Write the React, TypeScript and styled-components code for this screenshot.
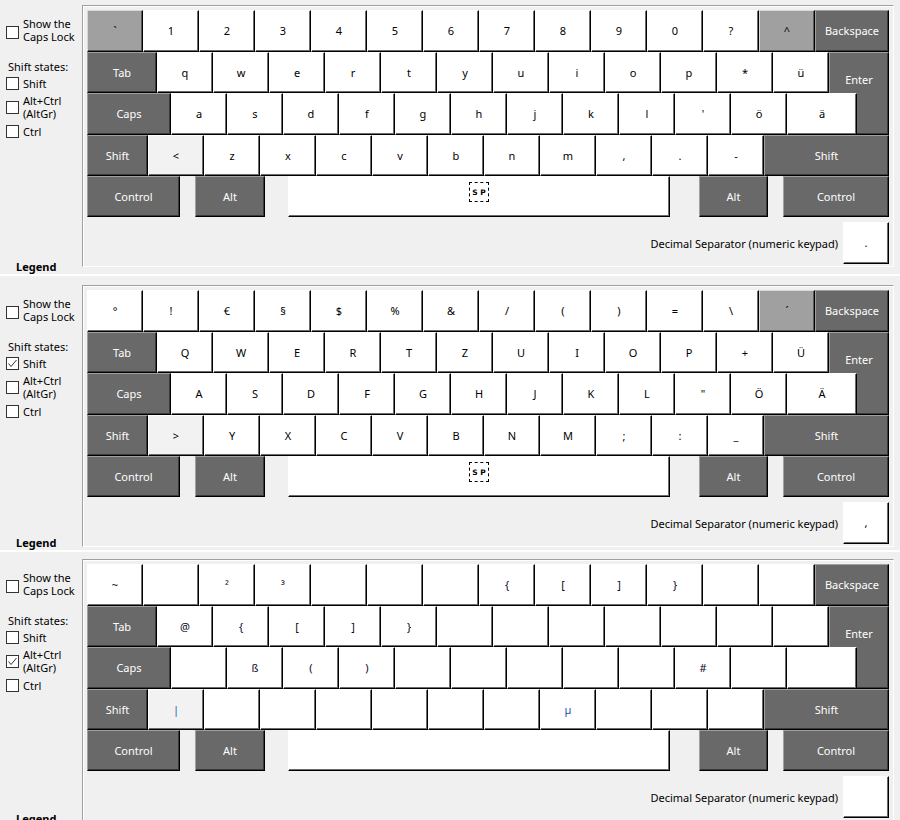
import React from 'react';
import styled, { createGlobalStyle } from 'styled-components';

const Global = createGlobalStyle`
  html, body { margin: 0; padding: 0; background: #f0f0f0; }
  body {
    width: 900px; height: 820px; overflow: hidden;
    font-family: "Noto Sans", "Open Sans", sans-serif;
    font-size: 11px; color: #000;
  }
`;

type Kind = 'white' | 'dark' | 'dead' | 'light';

const palette: Record<Kind, { bg: string; hl: string; fg: string; sh: string }> = {
  white: { bg: '#ffffff', hl: '#ffffff', fg: '#000000', sh: '#6b6b6b' },
  dark: { bg: '#696969', hl: '#a0a0a0', fg: '#ffffff', sh: '#3a3a3a' },
  dead: { bg: '#a0a0a0', hl: '#d8d8d8', fg: '#000000', sh: '#5a5a5a' },
  light: { bg: '#f2f2f2', hl: '#ffffff', fg: '#000000', sh: '#6b6b6b' },
};

const Page = styled.div`
  display: flex;
  flex-direction: column;
`;

const Divider = styled.div`
  height: 2px;
  flex-shrink: 0;
  background: #ffffff;
`;

const Panel = styled.section<{ $top: number }>`
  display: flex;
  flex-shrink: 0;
  height: 274px;
  box-sizing: border-box;
  padding-top: ${(p) => p.$top}px;
`;

const Sidebar = styled.div`
  width: 82px;
  flex-shrink: 0;
  display: flex;
  flex-direction: column;
  padding: 12px 0 0 6px;
  box-sizing: border-box;
  line-height: 13px;
  font-size: 11px;
`;

const OptionRow = styled.label<{ $mt: number; $boxTop: number }>`
  display: flex;
  align-items: flex-start;
  gap: 4px;
  margin-top: ${(p) => p.$mt}px;
  & > span:first-child { margin-top: ${(p) => p.$boxTop}px; }
`;

const OptionText = styled.span`
  display: flex;
  flex-direction: column;
  white-space: nowrap;
`;

const Heading = styled.div`
  margin-top: 17px;
  padding-left: 2px;
  white-space: nowrap;
`;

const Box = styled.span`
  width: 13px;
  height: 13px;
  flex-shrink: 0;
  box-sizing: border-box;
  border: 1px solid #333333;
  background: #ffffff;
  display: flex;
`;

const Legend = styled.div`
  margin-top: auto;
  padding-left: 10px;
  font-weight: 700;
  font-size: 11px;
  line-height: 14px;
`;

const Frame = styled.div`
  width: 812px;
  height: 262px;
  flex-shrink: 0;
  box-sizing: border-box;
  border: 1px solid;
  border-color: #a0a0a0 #ffffff #ffffff #a0a0a0;
  box-shadow: inset 1px 1px 0 #ffffff;
  padding: 4px 4px 2px 4px;
  display: flex;
  flex-direction: column;
`;

const Row = styled.div<{ $h: number }>`
  display: flex;
  height: ${(p) => p.$h}px;
`;

const MidBlock = styled.div`
  display: grid;
  grid-template-columns: 742px 28px 32px;
  grid-template-rows: 41px 42px;
`;

const UpperRow = styled.div`
  grid-column: 1;
  grid-row: 1;
  display: flex;
`;

const LowerRow = styled.div`
  grid-column: 1 / 3;
  grid-row: 2;
  display: flex;
  z-index: 1;
`;

const Key = styled.div<{ $w: number; $kind: Kind; $ml?: number }>`
  box-sizing: border-box;
  width: ${(p) => p.$w}px;
  height: 100%;
  flex-shrink: 0;
  margin-left: ${(p) => p.$ml ?? 0}px;
  display: flex;
  align-items: center;
  justify-content: center;
  padding-bottom: 1px;
  background: ${(p) => palette[p.$kind].bg};
  color: ${(p) => palette[p.$kind].fg};
  border-style: solid;
  border-width: 1px;
  border-color: ${(p) => `${palette[p.$kind].hl} #000 #000 ${palette[p.$kind].hl}`};
  box-shadow: inset -1px -1px 0 ${(p) => palette[p.$kind].sh};
  font-size: 11px;
  white-space: nowrap;
`;

const EnterKey = styled(Key)`
  grid-column: 2 / 4;
  grid-row: 1 / 3;
  width: auto;
  align-items: flex-start;
  padding-top: 19px;
`;

const SpaceMark = styled.span`
  width: 20px;
  height: 20px;
  box-sizing: border-box;
  border: 1px dashed #000;
  display: flex;
  align-items: center;
  justify-content: center;
  font-size: 7.5px;
  font-weight: 700;
  white-space: pre;
  margin-bottom: 8px;
  font-family: "DejaVu Sans", sans-serif;
`;

const DecimalRow = styled.div`
  display: flex;
  justify-content: flex-end;
  align-items: center;
  margin-top: 5px;
  height: 42px;
`;

const DecimalLabel = styled.span`
  margin-right: 5px;
  font-size: 11px;
  white-space: nowrap;
`;

const AltLabel = styled.span<{ $blue: boolean }>`
  color: ${(p) => (p.$blue ? '#1f55b0' : '#0a0a28')};
`;

function Check({ on }: { on: boolean }) {
  return (
    <Box>
      {on && (
        <svg width="11" height="11" viewBox="0 0 11 11">
          <polyline points="1.5,5.5 4,8.5 9.5,2" fill="none" stroke="#333" strokeWidth="1" />
        </svg>
      )}
    </Box>
  );
}

type PanelData = {
  top: number;
  checks: [boolean, boolean, boolean];
  row1: string[];
  dead: number[];
  row2: string[];
  row3: string[];
  row4: string[];
  dec: string;
  sp: boolean;
  alt?: boolean;
};

const panels: PanelData[] = [
  {
    top: 5,
    checks: [false, false, false],
    row1: ['`', '1', '2', '3', '4', '5', '6', '7', '8', '9', '0', '?', '^'],
    dead: [0, 12],
    row2: ['q', 'w', 'e', 'r', 't', 'y', 'u', 'i', 'o', 'p', '*', 'ü'],
    row3: ['a', 's', 'd', 'f', 'g', 'h', 'j', 'k', 'l', "'", 'ö', 'ä'],
    row4: ['<', 'z', 'x', 'c', 'v', 'b', 'n', 'm', ',', '.', '-'],
    dec: '.',
    sp: true,
  },
  {
    top: 9,
    checks: [true, false, false],
    row1: ['°', '!', '€', '§', '$', '%', '&', '/', '(', ')', '=', '\\', '´'],
    dead: [12],
    row2: ['Q', 'W', 'E', 'R', 'T', 'Z', 'U', 'I', 'O', 'P', '+', 'Ü'],
    row3: ['A', 'S', 'D', 'F', 'G', 'H', 'J', 'K', 'L', '"', 'Ö', 'Ä'],
    row4: ['>', 'Y', 'X', 'C', 'V', 'B', 'N', 'M', ';', ':', '_'],
    dec: ',',
    sp: true,
  },
  {
    top: 7,
    checks: [false, true, false],
    row1: ['~', '', '²', '³', '', '', '', '{', '[', ']', '}', '', ''],
    dead: [],
    row2: ['@', '{', '[', ']', '}', '', '', '', '', '', '', ''],
    row3: ['', 'ß', '(', ')', '', '', '', '', '', '#', '', ''],
    row4: ['|', '', '', '', '', '', '', 'µ', '', '', ''],
    dec: '',
    sp: false,
    alt: true,
  },
];

function KeyboardPanel({ d }: { d: PanelData }) {
  const lbl = (s: string) =>
    d.alt ? <AltLabel $blue={s === '|' || s === 'µ'}>{s}</AltLabel> : s;
  return (
    <Panel $top={d.top}>
      <Sidebar>
        <OptionRow $mt={0} $boxTop={9}>
          <Check on={false} />
          <OptionText>
            <span>Show the</span>
            <span>Caps Lock</span>
          </OptionText>
        </OptionRow>
        <Heading>Shift states:</Heading>
        <OptionRow $mt={4} $boxTop={0}>
          <Check on={d.checks[0]} />
          <OptionText>Shift</OptionText>
        </OptionRow>
        <OptionRow $mt={4} $boxTop={7}>
          <Check on={d.checks[1]} />
          <OptionText>
            <span>Alt+Ctrl</span>
            <span>(AltGr)</span>
          </OptionText>
        </OptionRow>
        <OptionRow $mt={5} $boxTop={0}>
          <Check on={d.checks[2]} />
          <OptionText>Ctrl</OptionText>
        </OptionRow>
        <Legend>Legend</Legend>
      </Sidebar>
      <Frame>
        <Row $h={42}>
          {d.row1.map((k, i) => (
            <Key key={i} $w={56} $kind={d.dead.includes(i) ? 'dead' : 'white'}>
              {lbl(k)}
            </Key>
          ))}
          <Key $w={74} $kind="dark">Backspace</Key>
        </Row>
        <MidBlock>
          <UpperRow>
            <Key $w={70} $kind="dark">Tab</Key>
            {d.row2.map((k, i) => (
              <Key key={i} $w={56} $kind="white">{lbl(k)}</Key>
            ))}
          </UpperRow>
          <EnterKey $w={60} $kind="dark">Enter</EnterKey>
          <LowerRow>
            <Key $w={84} $kind="dark">Caps</Key>
            {d.row3.map((k, i) => (
              <Key key={i} $w={i === 11 ? 70 : 56} $kind="white">{lbl(k)}</Key>
            ))}
          </LowerRow>
        </MidBlock>
        <Row $h={41}>
          <Key $w={61} $kind="dark">Shift</Key>
          {d.row4.map((k, i) => (
            <Key key={i} $w={56} $kind={i === 0 ? 'light' : 'white'}>{lbl(k)}</Key>
          ))}
          <Key $w={125} $kind="dark">Shift</Key>
        </Row>
        <Row $h={41}>
          <Key $w={93} $kind="dark">Control</Key>
          <Key $w={70} $kind="dark" $ml={15}>Alt</Key>
          <Key $w={382} $kind="white" $ml={23}>
            {d.sp && <SpaceMark>{'S P'}</SpaceMark>}
          </Key>
          <Key $w={69} $kind="dark" $ml={29}>Alt</Key>
          <Key $w={106} $kind="dark" $ml={15}>Control</Key>
        </Row>
        <DecimalRow>
          <DecimalLabel>Decimal Separator (numeric keypad)</DecimalLabel>
          <Key $w={46} $kind="white">{lbl(d.dec)}</Key>
        </DecimalRow>
      </Frame>
    </Panel>
  );
}

export default function App() {
  return (
    <Page>
      <Global />
      <KeyboardPanel d={panels[0]} />
      <Divider />
      <KeyboardPanel d={panels[1]} />
      <Divider />
      <KeyboardPanel d={panels[2]} />
    </Page>
  );
}
